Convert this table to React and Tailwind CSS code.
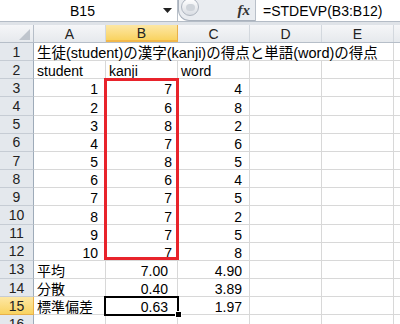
import React from "react";

const FONT = { fontFamily: '"Liberation Sans", "Noto Sans CJK JP", sans-serif' };

const cols = ["A", "B", "C", "D", "E"];

// each cell: [text, align, padClass]
const rows = [
  { n: 1, span: "生徒(student)の漢字(kanji)の得点と単語(word)の得点" },
  { n: 2, cells: [["student", "l"], ["kanji", "l"], ["word", "l"]] },
  ...[
    [1, 7, 4],
    [2, 6, 8],
    [3, 8, 2],
    [4, 7, 6],
    [5, 8, 5],
    [6, 6, 4],
    [7, 7, 5],
    [8, 7, 2],
    [9, 7, 5],
    [10, 7, 8],
  ].map((r, i) => ({
    n: i + 3,
    cells: [
      [String(r[0]), "r", "pr-[7px]"],
      [String(r[1]), "r", "pr-[5px]"],
      [String(r[2]), "r", "pr-[7px]"],
    ],
  })),
  { n: 13, cells: [["平均", "l"], ["7.00", "r", "pr-[9px]"], ["4.90", "r", "pr-[7px]"]] },
  { n: 14, cells: [["分散", "l"], ["0.40", "r", "pr-[9px]"], ["3.89", "r", "pr-[7px]"]] },
  { n: 15, cells: [["標準偏差", "l"], ["0.63", "r", "pr-[9px]"], ["1.97", "r", "pr-[7px]"]] },
  { n: 16, cells: [] },
];

const RowHead = ({ n }) => {
  const sel = n === 15;
  return (
    <div
      className={`w-[34px] shrink-0 flex items-center justify-center border-r text-[14px] leading-none ${
        sel
          ? "bg-gradient-to-b from-[#fde7a3] to-[#f9d35f] border-[#e8b04a] border-b border-b-[#e8b04a]"
          : "bg-[#e4e8ed] border-[#9eabb9] border-b border-b-[#c6ccd4]"
      } text-[#222]`}
    >
      {n}
    </div>
  );
};

const Cell = ({ cell }) => {
  const [text, align, pad] = cell || [];
  return (
    <div
      className={`w-[72px] shrink-0 flex items-end border-r border-b border-[#d8d8d8] text-[14px] leading-none whitespace-nowrap overflow-hidden ${
        align === "r" ? `justify-end ${pad}` : "pl-[3px]"
      }`}
    >
      {text}
    </div>
  );
};

export default function App() {
  return (
    <div className="relative w-[400px] h-[324px] overflow-hidden bg-white text-black" style={FONT}>
      {/* name box + formula bar */}
      <div className="flex h-[21px] bg-white">
        <div className="w-[178px] shrink-0 flex items-center border-r border-[#b9c0c9]">
          <div className="flex-1 text-center text-[14px] leading-none pl-[2px]">B15</div>
          <svg width="9" height="5" viewBox="0 0 9 5" className="mr-[5px]">
            <polygon points="0,0 9,0 4.5,5" fill="#222" />
          </svg>
        </div>
        <div className="w-[77px] shrink-0 flex items-start bg-[#e9ecf0] border-b border-l border-[#aab2bd] rounded-bl-[11px]">
          <div className="w-[18px] h-[18px] ml-[2px] -mt-[2px] rounded-full border border-[#aeb5bf] bg-gradient-to-b from-[#ffffff] to-[#d9dde3] flex items-center justify-center">
            <div className="w-[9px] h-[7px] rounded-full bg-[#cfd4da]" />
          </div>
          <div className="flex-1" />
          <div
            className="self-center mr-[5px] italic font-bold text-[15px] leading-none text-[#333]"
            style={{ fontFamily: '"Liberation Serif", serif' }}
          >
            fx
          </div>
        </div>
        <div className="flex-1 flex items-center border-l border-[#b9c0c9] pl-[7px] text-[14px] leading-none">
          =STDEVP(B3:B12)
        </div>
      </div>
      <div className="h-[4px] border-t border-[#b4bcc6] bg-[#dfe3e8]" />

      {/* column headers */}
      <div className="flex h-[18px] border-b border-[#b6bec8] bg-gradient-to-b from-[#f5f6f8] to-[#e6e9ed]">
        <div className="w-[34px] shrink-0 flex items-end justify-end border-r border-[#b6bec8] pr-[3px] pb-[2px]">
          <svg width="11" height="11" viewBox="0 0 11 11">
            <polygon points="11,0 11,11 0,11" fill="#bfc5cd" />
          </svg>
        </div>
        {cols.map((c) => (
          <div
            key={c}
            className={`w-[72px] shrink-0 flex items-center justify-center border-r text-[14px] leading-none text-[#222] ${
              c === "B"
                ? "bg-gradient-to-b from-[#fde7a3] to-[#f9d35f] border-[#e8b04a] border-b-2 border-b-[#f2b84b]"
                : "border-[#d3d8de]"
            }`}
          >
            {c}
          </div>
        ))}
        <div className="flex-1" />
      </div>

      {/* rows */}
      {rows.map((r) => (
        <div key={r.n} className="flex h-[18.17px]">
          <RowHead n={r.n} />
          {r.span ? (
            <div className="w-[360px] shrink-0 flex items-end border-r border-b border-[#d8d8d8] pl-[3px] text-[14.5px] leading-none whitespace-nowrap">
              {r.span}
            </div>
          ) : (
            cols.map((c, i) => <Cell key={c} cell={r.cells[i]} />)
          )}
          <div className="flex-1 border-b border-[#d8d8d8]" />
        </div>
      ))}

      {/* red box around B3:B12 */}
      <div className="absolute left-[104px] top-[78px] w-[75px] h-[182px] border-[3px] border-[#e8232b] pointer-events-none" />
      {/* selected cell B15 */}
      <div className="absolute left-[104px] top-[296px] w-[75px] h-[20px] border-2 border-black pointer-events-none" />
      <div className="absolute left-[175px] top-[311px] w-[7px] h-[7px] bg-black border border-white" />
    </div>
  );
}
